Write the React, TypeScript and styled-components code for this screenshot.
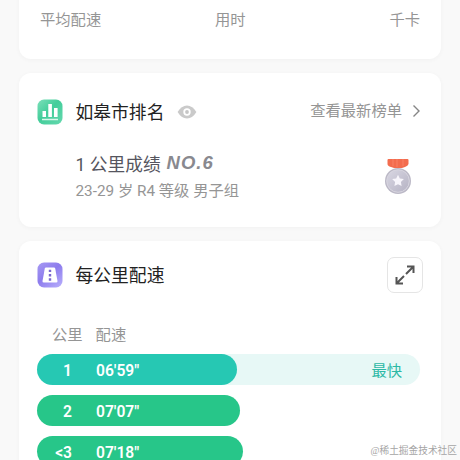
import React from "react";
import styled, { createGlobalStyle } from "styled-components";

const GlobalStyle = createGlobalStyle`
  * { box-sizing: border-box; }
  body { margin: 0; background: #f9f9f9; }
`;

const Screen = styled.main`
  position: relative;
  width: 460px;
  height: 460px;
  overflow: hidden;
  padding: 0 19px;
  display: flex;
  flex-direction: column;
  gap: 14px;
  background: #f9f9f9;
  font-family: Roboto, "Noto Sans CJK SC", sans-serif;
  font-size: 15.3px;
  color: #959595;
`;

const Card = styled.section<{ $height: number }>`
  flex: none;
  height: ${(p) => p.$height}px;
  background: #fff;
  border-radius: 12px;
  box-shadow: 0 1px 5px rgba(0, 0, 0, 0.035);
`;

const SummaryCard = styled(Card)`
  margin-top: -20px;
  padding: 29px 21px 0;
`;

const SummaryLabels = styled.div`
  display: flex;
  justify-content: space-between;
  line-height: 22px;
`;

const TimeLabel = styled.span`
  margin-left: -30px;
`;

const CardHeader = styled.header<{ $height: number }>`
  display: flex;
  align-items: center;
  height: ${(p) => p.$height}px;
  padding: 0 18px;
`;

const Title = styled.h2`
  margin: 2px 12.5px 0 12.5px;
  font-size: 17.8px;
  line-height: 26px;
  font-weight: 400;
  color: #222;
`;

const RankingLink = styled.a`
  display: flex;
  align-items: center;
  gap: 10px;
  margin: -3px 2px 0 auto;
  line-height: 24px;
`;

const Result = styled.div`
  display: flex;
  justify-content: space-between;
  padding: 0 29px 0 56.5px;
`;

const Score = styled.div`
  display: flex;
  align-items: center;
  gap: 6px;
  height: 28px;
  margin: -2px 0 2px;
  font-size: 17.7px;
  color: #55555e;
`;

const Rank = styled.strong`
  font-family: "Liberation Sans", sans-serif;
  font-size: 18.5px;
  letter-spacing: 1px;
  font-style: italic;
  color: #89898f;
`;

const Group = styled.div`
  line-height: 24px;
`;

const Medal = styled.div`
  display: flex;
  margin-top: 7px;
`;

const ExpandButton = styled.button`
  display: grid;
  place-items: center;
  width: 36px;
  height: 36px;
  margin-left: auto;
  padding: 0;
  border: 1px solid #e5e5e5;
  border-radius: 7px;
  background: #fff;
`;

const PaceHeadings = styled.div`
  display: flex;
  gap: 13px;
  padding: 0 33px;
  margin-top: 14px;
  line-height: 24px;
`;

const PaceList = styled.div`
  display: flex;
  flex-direction: column;
  gap: 10px;
  margin: 7px 21px 0 18px;
`;

const PaceTrack = styled.div<{ $fastest?: boolean }>`
  display: flex;
  align-items: center;
  justify-content: space-between;
  height: 31px;
  padding-right: 18px;
  border-radius: 16px;
  background: ${(p) => (p.$fastest ? "#e7f8f6" : "transparent")};
  color: #2cb9a5;
`;

const FastestLabel = styled.span`
  margin-top: -2px;
`;

const PaceBar = styled.div<{ $width: number; $fastest?: boolean }>`
  display: grid;
  grid-template-columns: 35px auto;
  column-gap: 24px;
  align-items: center;
  width: ${(p) => p.$width}px;
  height: 31px;
  padding-top: 3px;
  border-radius: 16px;
  background: ${(p) => (p.$fastest ? "#26c8b3" : "#27c689")};
  color: #fff;
  font-size: 15.6px;
  font-weight: 600;
  line-height: 28px;
`;

const Kilometer = styled.span`
  text-align: right;
`;

const Watermark = styled.div`
  position: absolute;
  right: 3px;
  bottom: 2px;
  font-family: "Liberation Serif", "Noto Sans CJK SC", serif;
  font-size: 9.7px;
  line-height: 14px;
  color: #a5a5a5;
`;

const ChartIcon = () => (
  <svg width="26" height="26" viewBox="0 0 26 26">
    <defs>
      <linearGradient id="green" x1="0" y1="0" x2="1" y2="1">
        <stop stopColor="#7ce0ba" />
        <stop offset="0.45" stopColor="#43cd9a" />
        <stop offset="1" stopColor="#65d9af" />
      </linearGradient>
    </defs>
    <rect x="0.5" y="0.5" width="25" height="25" rx="6.5" fill="url(#green)" />
    <path d="M5.500 12h3.500v6H5.500zM11.300 5h3.600v13h-3.600zM17 9h3.600v9H17z" fill="#fff" />
    <path d="M5 20.500h16" stroke="#d8f7ea" strokeWidth="1.500" />
  </svg>
);

const RoadIcon = () => (
  <svg width="26" height="26" viewBox="0 0 26 26">
    <defs>
      <linearGradient id="purple" x1="0" y1="0" x2="0.8" y2="1">
        <stop stopColor="#a79af3" />
        <stop offset="0.5" stopColor="#8d7ced" />
        <stop offset="1" stopColor="#b2a8fa" />
      </linearGradient>
    </defs>
    <rect x="0.5" y="0.5" width="25" height="25" rx="6.5" fill="url(#purple)" />
    <path d="M9 5.500h8q1 0 1.200 1l2.300 12.500q.2 1.500-1.300 1.500H6.800q-1.500 0-1.300-1.500L7.800 6.500q.2-1 1.200-1Z" fill="#fff" />
    <path d="M11.800 7.700h2.400v2.400h-2.400zM11.800 12h2.400v2.400h-2.400zM11.800 16.300h2.400v2.400h-2.400z" fill="#7967cf" />
  </svg>
);

const EyeIcon = () => (
  <svg width="20" height="14" viewBox="0 0 20 14">
    <path d="M.6 7Q4.500.5 10 .5T19.400 7Q15.500 13.500 10 13.500T.6 7Z" fill="#cacaca" />
    <circle cx="10" cy="7" r="3.700" fill="#fff" />
    <circle cx="10" cy="7" r="1.900" fill="#c6c6c6" />
  </svg>
);

const ChevronIcon = () => (
  <svg width="9" height="14" viewBox="0 0 9 14" fill="none" stroke="#858585" strokeWidth="1.400">
    <path d="m1.500 1.500 5.500 5.500-5.500 5.500" />
  </svg>
);

const MedalIcon = () => (
  <svg width="28" height="37" viewBox="0 0 28 37">
    <defs>
      <linearGradient id="silver" x1="0" y1="0" x2="1" y2="1">
        <stop stopColor="#d9d7e3" />
        <stop offset="1" stopColor="#b5b2c3" />
      </linearGradient>
    </defs>
    <path d="M4.500 1h19q1 0 1 1v4q-.5 2-3.500 3l-3 1h-8L7 9Q3.500 8 3.500 6V2q0-1 1-1Z" fill="#f36c4e" />
    <path d="M9 1v7M13 1v8M19 1v7" stroke="#fa8064" strokeWidth="1" />
    <circle cx="14" cy="23" r="13" fill="#bbb8c6" />
    <circle cx="14" cy="23" r="11.300" fill="url(#silver)" stroke="#d8d6e0" strokeWidth="1" />
    <path d="m14 16.800 1.800 3.700 4.100.6-3 2.900.7 4.100-3.600-1.900-3.600 1.900.7-4.100-3-2.900 4.100-.6z" fill="#f7f5fb" />
  </svg>
);

const ExpandIcon = () => (
  <svg width="20" height="20" viewBox="0 0 20 20" fill="none" stroke="#555" strokeWidth="2">
    <path d="M12 1.500h6.500V8M18 2l-7 7M1.500 12v6.500H8M2 18l7-7" />
  </svg>
);

const paces = [
  { kilometer: "1", time: "06'59\"", width: 200, fastest: true },
  { kilometer: "2", time: "07'07\"", width: 202.5 },
  { kilometer: "<3", time: "07'18\"", width: 205.5 },
];

export default function App() {
  return (
    <Screen>
      <GlobalStyle />
      <SummaryCard $height={79}>
        <SummaryLabels>
          <span>平均配速</span>
          <TimeLabel>用时</TimeLabel>
          <span>千卡</span>
        </SummaryLabels>
      </SummaryCard>

      <Card $height={154}>
        <CardHeader $height={78}>
          <ChartIcon />
          <Title>如皋市排名</Title>
          <EyeIcon />
          <RankingLink>
            查看最新榜单
            <ChevronIcon />
          </RankingLink>
        </CardHeader>
        <Result>
          <div>
            <Score>
              1 公里成绩 <Rank>NO.6</Rank>
            </Score>
            <Group>23-29 岁 R4 等级 男子组</Group>
          </div>
          <Medal>
            <MedalIcon />
          </Medal>
        </Result>
      </Card>

      <Card $height={240}>
        <CardHeader $height={68}>
          <RoadIcon />
          <Title>每公里配速</Title>
          <ExpandButton aria-label="展开">
            <ExpandIcon />
          </ExpandButton>
        </CardHeader>
        <PaceHeadings>
          <span>公里</span>
          <span>配速</span>
        </PaceHeadings>
        <PaceList>
          {paces.map((pace) => (
            <PaceTrack key={pace.kilometer} $fastest={pace.fastest}>
              <PaceBar $width={pace.width} $fastest={pace.fastest}>
                <Kilometer>{pace.kilometer}</Kilometer>
                <span>{pace.time}</span>
              </PaceBar>
              {pace.fastest && <FastestLabel>最快</FastestLabel>}
            </PaceTrack>
          ))}
        </PaceList>
      </Card>
      <Watermark>@稀土掘金技术社区</Watermark>
    </Screen>
  );
}
